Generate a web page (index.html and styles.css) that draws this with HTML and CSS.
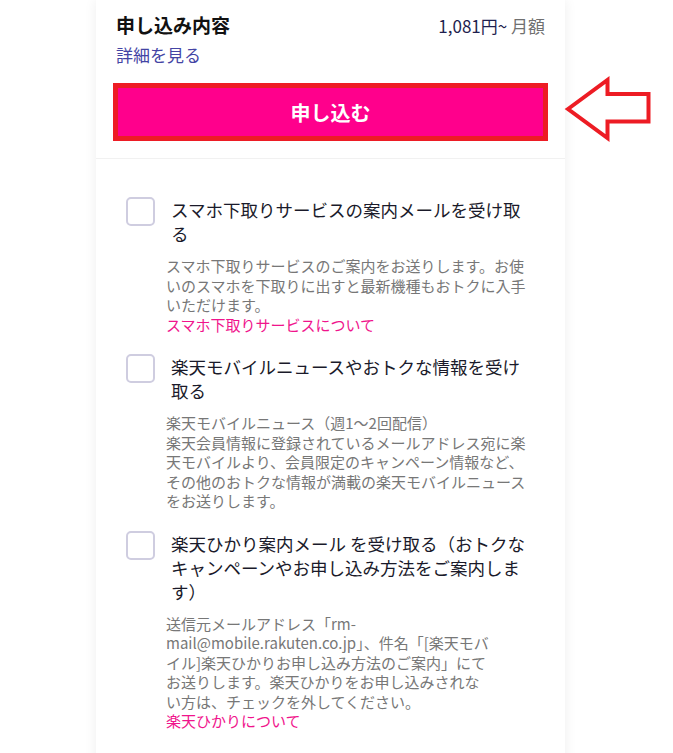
FILE: index.html
```html
<!DOCTYPE html>
<html lang="ja">
<head>
<meta charset="utf-8">
<title>申し込み内容</title>
<link rel="stylesheet" href="styles.css">
</head>
<body>
<div class="card">
  <section class="summary">
    <div class="summary-head">
      <h2 class="summary-title">申し込み内容</h2>
      <div class="price"><span class="price-value">1,081円~</span> <span class="price-unit">月額</span></div>
    </div>
    <a class="detail-link" href="#">詳細を見る</a>
    <button class="apply-btn" type="button">申し込む</button>
  </section>
  <section class="options">
    <div class="option">
      <label class="option-row">
        <span class="checkbox"></span>
        <span class="option-title">スマホ下取りサービスの案内メールを受け取る</span>
      </label>
      <p class="option-desc">スマホ下取りサービスのご案内をお送りします。お使いのスマホを下取りに出すと最新機種もおトクに入手いただけます。<br><a class="pink-link" href="#">スマホ下取りサービスについて</a></p>
    </div>
    <div class="option">
      <label class="option-row">
        <span class="checkbox"></span>
        <span class="option-title">楽天モバイルニュースやおトクな情報を受け取る</span>
      </label>
      <p class="option-desc">楽天モバイルニュース（週1〜2回配信）<br>楽天会員情報に登録されているメールアドレス宛に楽天モバイルより、会員限定のキャンペーン情報など、その他のおトクな情報が満載の楽天モバイルニュースをお送りします。</p>
    </div>
    <div class="option">
      <label class="option-row">
        <span class="checkbox"></span>
        <span class="option-title">楽天ひかり案内メール を受け取る（おトクなキャンペーンやお申し込み方法をご案内します）</span>
      </label>
      <p class="option-desc">送信元メールアドレス「rm-<br>mail@mobile.rakuten.co.jp」、件名「[楽天モバ<br>イル]楽天ひかりお申し込み方法のご案内」にて<br>お送りします。楽天ひかりをお申し込みされな<br>い方は、チェックを外してください。<br><a class="pink-link" href="#">楽天ひかりについて</a></p>
    </div>
  </section>
</div>
<svg class="annot-arrow" width="96" height="76" viewBox="0 0 96 76" aria-hidden="true">
  <polygon points="8,39 47.5,10 47.5,24 88.5,24 88.5,51.5 47.5,51.5 47.5,68" fill="#ffffff" stroke="#ed1c24" stroke-width="4" stroke-linejoin="miter"/>
</svg>
</body>
</html>
```

FILE: styles.css
```css
* {
  box-sizing: border-box;
}

html, body {
  margin: 0;
  padding: 0;
  background: #ffffff;
}

body {
  font-family: "Noto Sans CJK JP", "Noto Sans", sans-serif;
  color: #1a1a1a;
  overflow: hidden;
  height: 753px;
}

.card {
  width: 469px;
  margin-left: 96px;
  background: #ffffff;
  box-shadow: 0 0 12px rgba(0, 0, 0, 0.07);
  min-height: 800px;
  display: flex;
  flex-direction: column;
}

.summary {
  padding: 12px 17px 17px;
  border-bottom: 1px solid #f1f1f1;
  display: flex;
  flex-direction: column;
}

.summary-head {
  display: flex;
  justify-content: space-between;
  align-items: baseline;
  padding: 0 3px;
}

.summary-title {
  margin: 0;
  font-size: 19px;
  line-height: 26px;
  font-weight: 700;
  color: #111111;
}

.price {
  font-size: 17px;
  line-height: 26px;
}

.price-value {
  color: #1f1f4f;
}

.price-unit {
  color: #707070;
}

.detail-link {
  margin-top: 4px;
  padding: 0 3px;
  font-size: 17px;
  line-height: 24px;
  color: #4444a4;
  text-decoration: none;
  align-self: flex-start;
}

.apply-btn {
  margin-top: 16px;
  height: 58px;
  width: 100%;
  border: 5px solid #ed1c24;
  background: #ff008c;
  color: #ffffff;
  font-family: inherit;
  font-size: 20px;
  font-weight: 700;
  padding: 0;
  cursor: pointer;
}

.options {
  padding: 38px 30px 0;
  display: flex;
  flex-direction: column;
  gap: 20px;
}

.option-row {
  display: flex;
  align-items: flex-start;
  gap: 16px;
}

.checkbox {
  flex: 0 0 29px;
  width: 29px;
  height: 29px;
  border: 2px solid #cfcde0;
  border-radius: 5px;
  background: #ffffff;
}

.option-title {
  flex: 1;
  margin-top: 1px;
  font-size: 17.5px;
  line-height: 24px;
  color: #1a1a2a;
}

.option-desc {
  margin: 10px 0 0 40px;
  font-size: 15px;
  line-height: 19.5px;
  color: #777777;
}

.pink-link {
  color: #f0148c;
  text-decoration: none;
}

.annot-arrow {
  position: absolute;
  left: 560px;
  top: 70px;
}
```
